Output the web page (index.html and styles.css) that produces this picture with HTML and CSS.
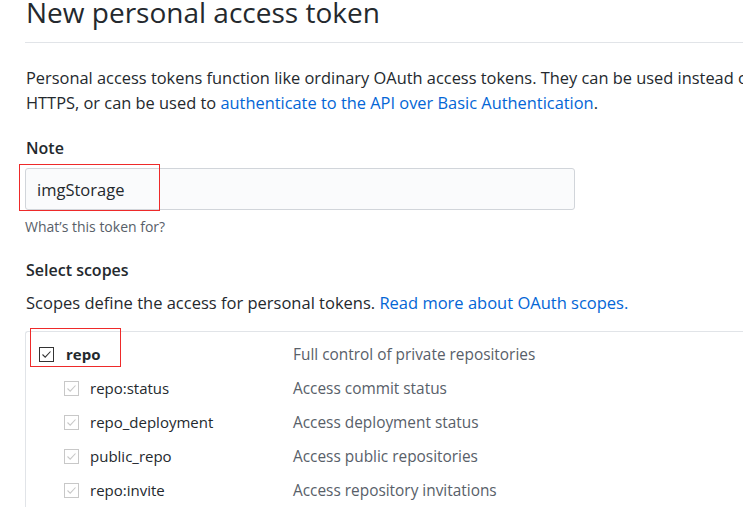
FILE: index.html
```html
<!DOCTYPE html>
<html lang="en">
<head>
<meta charset="utf-8">
<title>New personal access token</title>
<link rel="stylesheet" href="styles.css">
</head>
<body>
<div class="page">
  <h1 class="title">New personal access token</h1>
  <p class="intro">Personal access tokens function like ordinary OAuth access tokens. They can be used instead of a password for Git over<br>HTTPS, or can be used to <a href="#">authenticate to the API over Basic Authentication</a>.</p>

  <div class="field">
    <label class="field-label" for="note">Note</label>
    <div class="input-wrap">
      <input id="note" class="input" type="text" value="imgStorage">
      <span class="mark mark-note"></span>
    </div>
    <p class="hint">What’s this token for?</p>
  </div>

  <h2 class="scopes-title">Select scopes</h2>
  <p class="scopes-desc">Scopes define the access for personal tokens. <a href="#">Read more about OAuth scopes.</a></p>

  <div class="scopes">
    <div class="scope scope-main">
      <span class="name">
        <svg class="cb" width="15" height="15" viewBox="0 0 15 15"><rect x="0.5" y="0.5" width="14" height="14" fill="#fff" stroke="#333"/><path d="M3.5 7.5 L6.2 10.2 L11.5 4.5" fill="none" stroke="#333" stroke-width="1.1"/></svg>
        <strong>repo</strong>
      </span>
      <span class="desc">Full control of private repositories</span>
      <span class="mark mark-repo"></span>
    </div>
    <div class="scope sub">
      <span class="name">
        <svg class="cb" width="15" height="15" viewBox="0 0 15 15"><rect x="0.5" y="0.5" width="14" height="14" fill="#fff" stroke="#c8c8c8"/><path d="M3.5 7.5 L6.2 10.2 L11.5 4.5" fill="none" stroke="#c8c8c8" stroke-width="1.1"/></svg>
        repo:status
      </span>
      <span class="desc">Access commit status</span>
    </div>
    <div class="scope sub">
      <span class="name">
        <svg class="cb" width="15" height="15" viewBox="0 0 15 15"><rect x="0.5" y="0.5" width="14" height="14" fill="#fff" stroke="#c8c8c8"/><path d="M3.5 7.5 L6.2 10.2 L11.5 4.5" fill="none" stroke="#c8c8c8" stroke-width="1.1"/></svg>
        repo_deployment
      </span>
      <span class="desc">Access deployment status</span>
    </div>
    <div class="scope sub">
      <span class="name">
        <svg class="cb" width="15" height="15" viewBox="0 0 15 15"><rect x="0.5" y="0.5" width="14" height="14" fill="#fff" stroke="#c8c8c8"/><path d="M3.5 7.5 L6.2 10.2 L11.5 4.5" fill="none" stroke="#c8c8c8" stroke-width="1.1"/></svg>
        public_repo
      </span>
      <span class="desc">Access public repositories</span>
    </div>
    <div class="scope sub">
      <span class="name">
        <svg class="cb" width="15" height="15" viewBox="0 0 15 15"><rect x="0.5" y="0.5" width="14" height="14" fill="#fff" stroke="#c8c8c8"/><path d="M3.5 7.5 L6.2 10.2 L11.5 4.5" fill="none" stroke="#c8c8c8" stroke-width="1.1"/></svg>
        repo:invite
      </span>
      <span class="desc">Access repository invitations</span>
    </div>
  </div>
</div>
</body>
</html>
```

FILE: styles.css
```css
html, body {
  margin: 0;
  padding: 0;
  background: #fff;
  overflow: hidden;
}
body {
  font-family: "Open Sans", "Noto Sans", sans-serif;
  color: #24292e;
}
a {
  color: #0366d6;
  text-decoration: none;
}
.page {
  padding-left: 25px;
}
.title {
  margin: -9px 0 0 0;
  padding: 0 0 9px 1px;
  font-size: 28px;
  font-weight: 400;
  line-height: 42px;
  border-bottom: 1px solid #e1e4e8;
  white-space: nowrap;
}
.intro {
  margin: 22px 0 0 1px;
  font-size: 16.4px;
  line-height: 25px;
  white-space: nowrap;
}
.field {
  margin-top: 21px;
}
.field-label {
  display: block;
  font-size: 16px;
  font-weight: 600;
  line-height: 24px;
  padding-left: 1px;
}
.input-wrap {
  position: relative;
  margin-top: 8px;
  width: 550px;
}
.input {
  display: block;
  box-sizing: border-box;
  width: 550px;
  height: 42px;
  padding: 0 11px;
  font-family: inherit;
  font-size: 16.5px;
  color: #24292e;
  background: #fafbfc;
  border: 1px solid #d1d5da;
  border-radius: 3px;
  outline: none;
}
.hint {
  margin: 7px 0 0 0;
  font-size: 14px;
  line-height: 20px;
  color: #586069;
}
.scopes-title {
  margin: 21px 0 0 1px;
  font-size: 16px;
  font-weight: 600;
  line-height: 24px;
}
.scopes-desc {
  margin: 9px 0 0 1px;
  font-size: 16.5px;
  line-height: 24px;
  white-space: nowrap;
}
.scopes {
  margin-top: 16px;
  border-top: 1px solid #e1e4e8;
  border-left: 1px solid #e1e4e8;
  border-top-left-radius: 3px;
  padding-top: 5px;
}
.scope {
  position: relative;
  display: grid;
  grid-template-columns: 267px 1fr;
  align-items: center;
  height: 34px;
  font-size: 15px;
}
.name {
  display: flex;
  align-items: center;
  gap: 12px;
  padding-left: 13px;
}
.sub .name {
  padding-left: 38px;
  gap: 11px;
}
.scope-main strong {
  font-weight: 700;
}
.desc {
  font-size: 15.4px;
  color: #586069;
}
.cb {
  flex: none;
  display: block;
}
.mark {
  position: absolute;
  border: 1px solid #ee2a2a;
  pointer-events: none;
}
.mark-note {
  left: -6px;
  top: -4px;
  width: 139px;
  height: 45px;
}
.mark-repo {
  left: 4px;
  top: -9px;
  width: 89px;
  height: 37px;
}
```
